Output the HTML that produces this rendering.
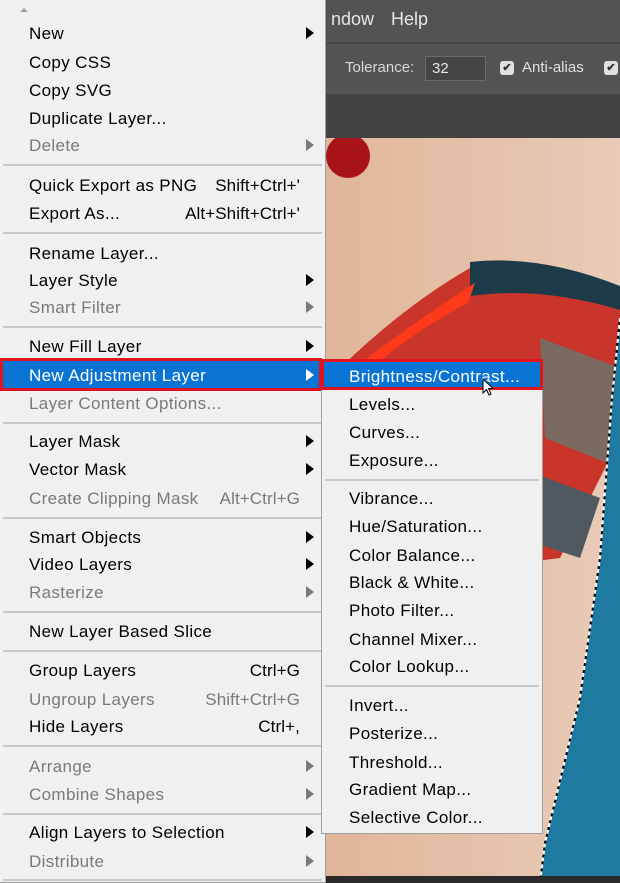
<!DOCTYPE html>
<html><head><meta charset="utf-8"><style>
*{margin:0;padding:0;box-sizing:border-box}
body{width:620px;height:883px;overflow:hidden;position:relative;background:#3a3a3a;font-family:"Liberation Sans",sans-serif}
.m{position:absolute;background:#f0f0f0;border:1px solid #a0a0a0}
.i{position:absolute;left:0;right:0;height:28px;line-height:29px;font-size:17px;color:#000;padding-left:29px;white-space:nowrap;letter-spacing:0.35px}
.d{color:#7a7a7a}
.sc{position:absolute;right:25px;top:0;letter-spacing:0.1px}
.ar{position:absolute;left:306px;top:8px;width:0;height:0;border-top:6px solid transparent;border-bottom:6px solid transparent;border-left:8px solid #000}
.d .ar{border-left-color:#7a7a7a}
.s{position:absolute;left:3px;right:3px;height:2px;background:#c8c8c8}
.sub .i{padding-left:27px}
</style></head><body>
<div style="position:absolute;left:0;top:0;width:620px;height:42px;background:#535353"></div>
<div style="position:absolute;left:331px;top:9px;color:#e6e6e6;font-size:18px">ndow</div>
<div style="position:absolute;left:391px;top:9px;color:#e6e6e6;font-size:18px">Help</div>
<div style="position:absolute;left:0;top:42px;width:620px;height:2px;background:#464646"></div>
<div style="position:absolute;left:0;top:44px;width:620px;height:50px;background:#535353"></div>
<div style="position:absolute;left:345px;top:59px;color:#d8d8d8;font-size:15px">Tolerance:</div>
<div style="position:absolute;left:425px;top:56px;width:61px;height:25px;background:#454545;border:1px solid #6a6a6a;color:#e6e6e6;font-size:15px;padding:3px 0 0 6px">32</div>
<div style="position:absolute;left:500px;top:61px;width:14px;height:14px;background:#e0e0e0;border-radius:3px;color:#333;font-size:11px;text-align:center;line-height:14px;font-weight:bold">✔</div>
<div style="position:absolute;left:522px;top:59px;color:#e0e0e0;font-size:15px">Anti-alias</div>
<div style="position:absolute;left:604px;top:61px;width:14px;height:14px;background:#e0e0e0;border-radius:3px;color:#333;font-size:11px;text-align:center;line-height:14px;font-weight:bold">✔</div>
<div style="position:absolute;left:0;top:94px;width:620px;height:2px;background:#454545"></div>
<div style="position:absolute;left:0;top:96px;width:620px;height:42px;background:#424242"></div>
<svg style="position:absolute;left:0;top:138px" width="620" height="745">
<defs><linearGradient id="sk" x1="0" x2="1"><stop offset="0" stop-color="#e6c6b0"/><stop offset=".5" stop-color="#e0b598"/><stop offset="1" stop-color="#e8cbb8"/></linearGradient></defs>
<rect width="620" height="745" fill="url(#sk)"/>
<circle cx="348" cy="18" r="22" fill="#a8141a"/>
<path d="M470 130 Q540 120 620 150 L620 300 L560 420 L480 430 L400 300 L330 240 Q400 170 470 130Z" fill="#c9352a"/>
<path d="M470 124 Q540 116 620 148 L620 172 Q540 148 470 158 Z" fill="#1d3a48"/>
<path d="M340 240 Q420 180 475 145 L468 165 Q400 200 345 255Z" fill="#ff3a1a"/>
<path d="M540 200 L620 230 L620 330 L545 300Z" fill="#7a6a60"/>
<path d="M520 330 L600 360 L580 420 L520 400Z" fill="#505860"/>
<path d="M620 180 L620 745 L540 745 L545 705 L580 560 L600 420 L612 260Z" fill="#1e7aa0"/>
<path d="M620 180 L612 260 L600 420 L580 560 L545 705 L540 745" fill="none" stroke="#fff" stroke-width="2" stroke-dasharray="4 3"/>
<path d="M620 180 L612 260 L600 420 L580 560 L545 705 L540 745" fill="none" stroke="#000" stroke-width="2" stroke-dasharray="3 4" stroke-dashoffset="3"/>
<rect x="0" y="738" width="620" height="7" fill="#2a2a2a"/>
</svg>
<div class="m" style="left:0;top:0;width:326px;height:883px;border-top:none;border-left:none">
<div style="position:absolute;left:20px;top:8px;width:0;height:0;border-left:4px solid transparent;border-right:4px solid transparent;border-bottom:4px solid #a0a0a0"></div>
<div class="i" style="top:19px">New<i class="ar"></i></div>
<div class="i" style="top:48px">Copy CSS</div>
<div class="i" style="top:76px">Copy SVG</div>
<div class="i" style="top:104px">Duplicate Layer...</div>
<div class="i d" style="top:131px">Delete<i class="ar"></i></div>
<div class="s" style="top:164px"></div>
<div class="i" style="top:171px">Quick Export as PNG<span class="sc">Shift+Ctrl+'</span></div>
<div class="i" style="top:199px">Export As...<span class="sc">Alt+Shift+Ctrl+'</span></div>
<div class="s" style="top:232px"></div>
<div class="i" style="top:239px">Rename Layer...</div>
<div class="i" style="top:266px">Layer Style<i class="ar"></i></div>
<div class="i d" style="top:293px">Smart Filter<i class="ar"></i></div>
<div class="s" style="top:326px"></div>
<div class="i" style="top:332px">New Fill Layer<i class="ar"></i></div>
<div style="position:absolute;left:0;top:358px;width:322px;height:33px;border:3px solid #e0141e;background:#0a74d4"></div>
<div class="i" style="top:361px;color:#fff">New Adjustment Layer<i class="ar" style="border-left-color:#fff"></i></div>
<div class="i d" style="top:389px">Layer Content Options...</div>
<div class="s" style="top:422px"></div>
<div class="i" style="top:427px">Layer Mask<i class="ar"></i></div>
<div class="i" style="top:455px">Vector Mask<i class="ar"></i></div>
<div class="i d" style="top:484px">Create Clipping Mask<span class="sc">Alt+Ctrl+G</span></div>
<div class="s" style="top:517px"></div>
<div class="i" style="top:523px">Smart Objects<i class="ar"></i></div>
<div class="i" style="top:550px">Video Layers<i class="ar"></i></div>
<div class="i d" style="top:578px">Rasterize<i class="ar"></i></div>
<div class="s" style="top:611px"></div>
<div class="i" style="top:617px">New Layer Based Slice</div>
<div class="s" style="top:650px"></div>
<div class="i" style="top:656px">Group Layers<span class="sc">Ctrl+G</span></div>
<div class="i d" style="top:685px">Ungroup Layers<span class="sc">Shift+Ctrl+G</span></div>
<div class="i" style="top:712px">Hide Layers<span class="sc">Ctrl+,</span></div>
<div class="s" style="top:745px"></div>
<div class="i d" style="top:752px">Arrange<i class="ar"></i></div>
<div class="i d" style="top:780px">Combine Shapes<i class="ar"></i></div>
<div class="s" style="top:813px"></div>
<div class="i" style="top:818px">Align Layers to Selection<i class="ar"></i></div>
<div class="i d" style="top:847px">Distribute<i class="ar"></i></div>
<div class="s" style="top:879px"></div>
</div>
<div class="m sub" style="left:321px;top:360px;width:222px;height:474px">
<div style="position:absolute;left:-1px;top:-2px;width:222px;height:31px;border:3px solid #e0141e;background:#0a74d4"></div>
<div class="i" style="top:1px;color:#fff">Brightness/Contrast...</div>
<div class="i" style="top:29px">Levels...</div>
<div class="i" style="top:57px">Curves...</div>
<div class="i" style="top:85px">Exposure...</div>
<div class="s" style="top:118px"></div>
<div class="i" style="top:123px">Vibrance...</div>
<div class="i" style="top:151px">Hue/Saturation...</div>
<div class="i" style="top:180px">Color Balance...</div>
<div class="i" style="top:207px">Black &amp; White...</div>
<div class="i" style="top:235px">Photo Filter...</div>
<div class="i" style="top:264px">Channel Mixer...</div>
<div class="i" style="top:291px">Color Lookup...</div>
<div class="s" style="top:324px"></div>
<div class="i" style="top:330px">Invert...</div>
<div class="i" style="top:358px">Posterize...</div>
<div class="i" style="top:387px">Threshold...</div>
<div class="i" style="top:414px">Gradient Map...</div>
<div class="i" style="top:442px">Selective Color...</div>
</div>
<svg style="position:absolute;left:482px;top:378px" width="14" height="20"><path d="M1 1 L1 15 L4.5 11.5 L7 17 L9 16 L6.5 10.5 L11 10.5 Z" fill="#fff" stroke="#000" stroke-width="1"/></svg>
</body></html>
